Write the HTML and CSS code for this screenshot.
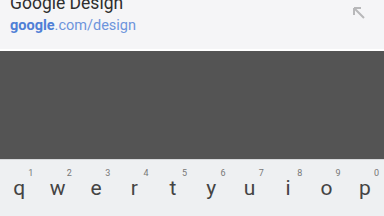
FILE: index.html
```html
<!DOCTYPE html>
<html lang="en">
<head>
    <meta charset="UTF-8">
    <title>Search suggestion</title>
    <link rel="stylesheet" href="styles.css">
</head>
<body>
    <div class="suggestion">
        <div class="suggestion-text">
            <div class="title">Google Design</div>
            <div class="url"><b>google</b>.com/design</div>
        </div>
        <svg class="fill-icon" width="14" height="14" viewBox="0 0 14 14">
            <path d="M2 2 L12 12 M2 2 L2 9 M2 2 L9 2" stroke="#b8b8ba" stroke-width="2" fill="none"/>
        </svg>
    </div>
    <div class="scrim"></div>
    <div class="keyboard">
        <div class="key-row">
            <div class="key"><span class="num">1</span>q</div>
            <div class="key"><span class="num">2</span>w</div>
            <div class="key"><span class="num">3</span>e</div>
            <div class="key"><span class="num">4</span>r</div>
            <div class="key"><span class="num">5</span>t</div>
            <div class="key"><span class="num">6</span>y</div>
            <div class="key"><span class="num">7</span>u</div>
            <div class="key"><span class="num">8</span>i</div>
            <div class="key"><span class="num">9</span>o</div>
            <div class="key"><span class="num">0</span>p</div>
        </div>
    </div>
</body>
</html>
```

FILE: styles.css
```css
* {
    margin: 0;
    padding: 0;
    box-sizing: border-box;
    font-family: Roboto, 'Noto Sans', sans-serif;
}

body {
    width: 384px;
    height: 216px;
    overflow: hidden;
    display: flex;
    flex-direction: column;
    background: #545454;
}

.suggestion {
    height: 51px;
    background: #f5f5f7;
    border-bottom: 2px solid #ffffff;
    display: flex;
    justify-content: space-between;
    padding: 0 18px 0 10px;
}

.suggestion-text {
    margin-top: -7px;
}

.title {
    font-size: 17.5px;
    color: #2e2e2e;
    line-height: 20px;
}

.url {
    font-size: 14.5px;
    color: #6d94dc;
    line-height: 18px;
    margin-top: 4px;
}

.url b {
    color: #4f7fd6;
    font-weight: 700;
}

.fill-icon {
    margin-top: 6px;
}

.scrim {
    height: 108px;
    background: #545454;
}

.keyboard {
    flex: 1;
    background: #eef0f2;
    border-top: 1px solid #d6d8da;
}

.key-row {
    display: flex;
    padding-top: 14px;
}

.key {
    flex: 1;
    position: relative;
    text-align: center;
    font-size: 21px;
    line-height: 26px;
    color: #444;
    padding-top: 1px;
}

.num {
    position: absolute;
    top: -6px;
    right: 5px;
    font-size: 9px;
    line-height: 10px;
    color: #777;
}
```
